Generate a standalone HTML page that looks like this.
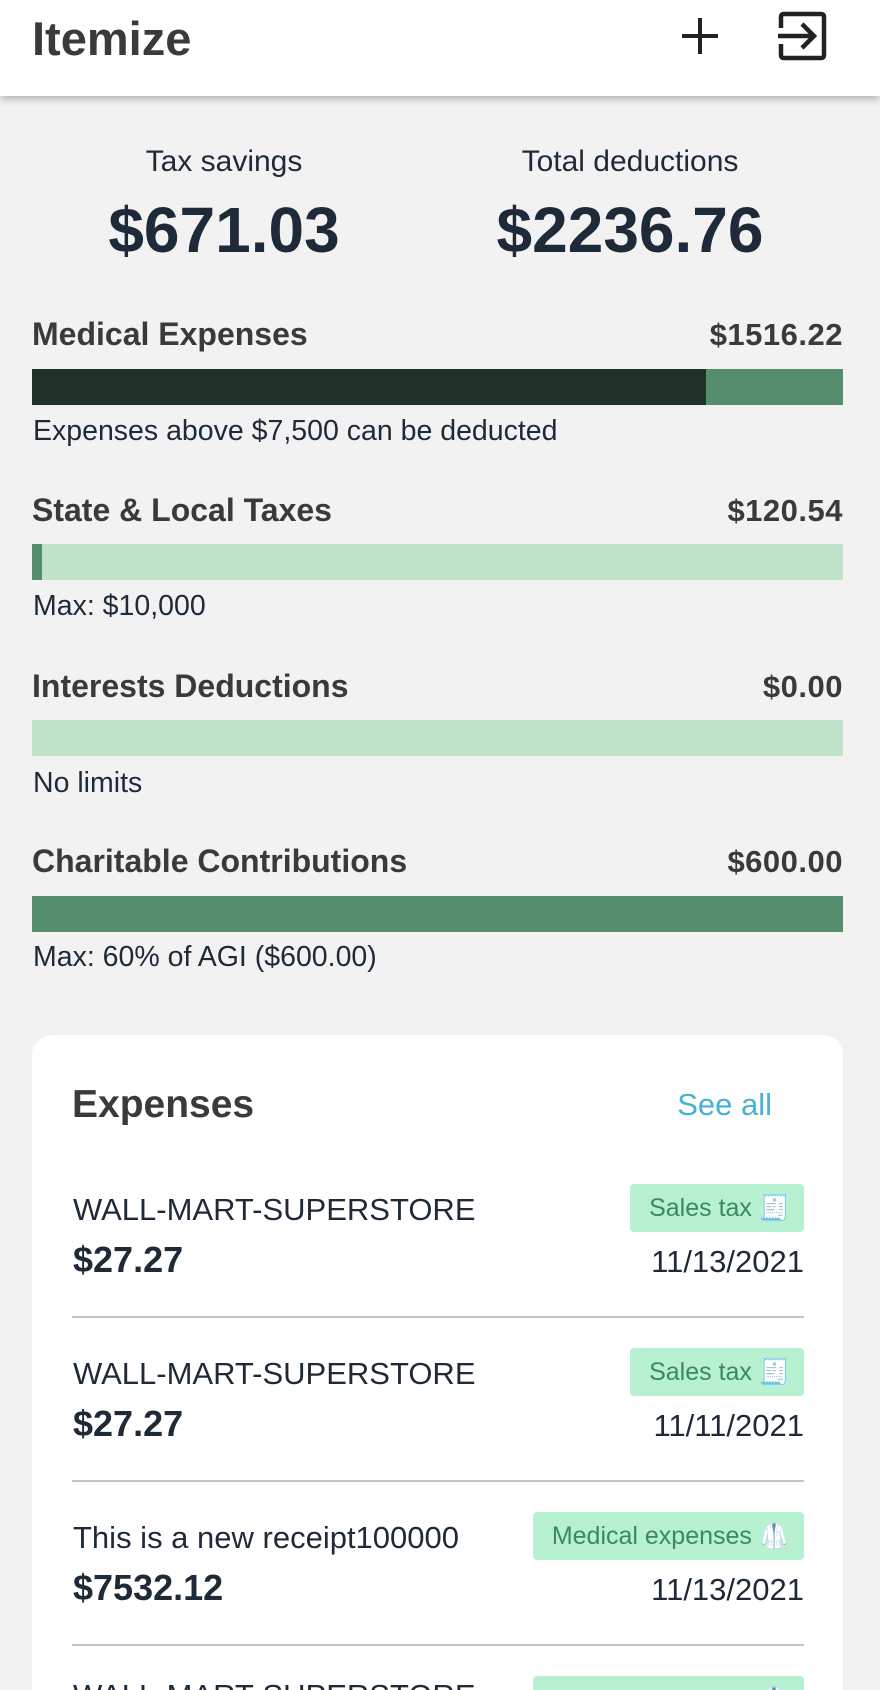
<!DOCTYPE html>
<html style="overflow:hidden;height:1690px"><head><meta charset="utf-8"><style>
*{margin:0;padding:0;box-sizing:border-box}
body{width:880px;height:1690px;overflow:hidden;background:#f2f2f2;font-family:"Liberation Sans",sans-serif;color:#1e2a38;position:relative}
.hdr{position:absolute;left:0;top:0;width:880px;height:96px;background:#fff;box-shadow:0 3px 8px rgba(0,0,0,.28)}
.hdr h1{position:absolute;left:32px;top:11px;font-size:47px;font-weight:bold;color:#3a3a3a}
.a{position:absolute;white-space:nowrap}
.lbl{font-size:30px;color:#1e2a38;text-align:center;width:360px}
.big{font-size:64px;font-weight:bold;color:#1e2a38;text-align:center;width:440px}
.cat{font-size:32px;font-weight:bold;color:#3a3a3a}
.amt{font-size:31px;font-weight:bold;color:#3a3a3a;right:37px;letter-spacing:.5px}
.bar{position:absolute;left:32px;width:811px;height:36px;background:#c0e3c9}
.cap{font-size:28.5px;color:#1e2a38;left:33px}
.card{position:absolute;left:32px;top:1035px;width:811px;height:655px;background:#fff;border-radius:20px 20px 0 0}
.nm{font-size:31px;left:73px;color:#1e2a38}
.pr{font-size:36px;font-weight:bold;left:73px;color:#1e2a38}
.dt{font-size:31px;right:76px;color:#1e2a38}
.tag{position:absolute;right:76px;height:48px;background:#b8f0d2;border-radius:4px;color:#3a8a5e;font-size:25px;line-height:48px;padding:0 14px 0 19px}
.dv{position:absolute;left:72px;width:732px;height:2px;background:#c4c4c4}
#wrap{position:absolute;left:0;top:0;width:880px;height:1690px;overflow:hidden}
</style></head><body><div id="wrap">
<div class="hdr"><h1>Itemize</h1>
<svg class="a" style="left:678px;top:14px" width="44" height="44" viewBox="0 0 44 44"><path d="M22 4V40M4 22H40" stroke="#222" stroke-width="4"/></svg>
<svg class="a" style="left:778px;top:10px" width="52" height="52" viewBox="0 0 52 52"><path d="M3 18V7Q3 4 6 4H43Q46 4 46 7V45Q46 48 43 48H6Q3 48 3 45V34" fill="none" stroke="#222" stroke-width="4.5"/><path d="M0 26H36M24 14L36 26L24 38" fill="none" stroke="#222" stroke-width="4.5"/></svg>
</div>
<div class="a lbl" style="left:44px;top:145px">Tax savings</div>
<div class="a lbl" style="left:450px;top:145px">Total deductions</div>
<div class="a big" style="left:4px;top:193px">$671.03</div>
<div class="a big" style="left:410px;top:193px">$2236.76</div>

<div class="a cat" style="left:32px;top:316px">Medical Expenses</div><div class="a amt" style="top:317px">$1516.22</div>
<div class="bar" style="top:369px;background:#558e6e"><div style="width:674px;height:36px;background:#203128"></div></div>
<div class="a cap" style="top:415px">Expenses above $7,500 can be deducted</div>

<div class="a cat" style="left:32px;top:492px">State &amp; Local Taxes</div><div class="a amt" style="top:493px">$120.54</div>
<div class="bar" style="top:544px"><div style="width:10px;height:36px;background:#558e6e"></div></div>
<div class="a cap" style="top:590px">Max: $10,000</div>

<div class="a cat" style="left:32px;top:668px">Interests Deductions</div><div class="a amt" style="top:669px">$0.00</div>
<div class="bar" style="top:720px"></div>
<div class="a cap" style="top:767px">No limits</div>

<div class="a cat" style="left:32px;top:843px">Charitable Contributions</div><div class="a amt" style="top:844px">$600.00</div>
<div class="bar" style="top:896px;background:#558e6e"></div>
<div class="a cap" style="top:941px">Max: 60% of AGI ($600.00)</div>

<div class="card"></div>
<div class="a" style="left:72px;top:1083px;font-size:39px;font-weight:bold;color:#3a3a3a">Expenses</div>
<div class="a" style="right:108px;top:1087px;font-size:31px;color:#45b2d3">See all</div>

<div class="tag" style="top:1184px">Sales tax 🧾</div>
<div class="a nm" style="top:1192px">WALL-MART-SUPERSTORE</div>
<div class="a pr" style="top:1239px">$27.27</div>
<div class="a dt" style="top:1244px">11/13/2021</div>
<div class="dv" style="top:1316px"></div>

<div class="tag" style="top:1348px">Sales tax 🧾</div>
<div class="a nm" style="top:1356px">WALL-MART-SUPERSTORE</div>
<div class="a pr" style="top:1403px">$27.27</div>
<div class="a dt" style="top:1408px">11/11/2021</div>
<div class="dv" style="top:1480px"></div>

<div class="tag" style="top:1512px">Medical expenses 🥼</div>
<div class="a nm" style="top:1520px">This is a new receipt100000</div>
<div class="a pr" style="top:1567px">$7532.12</div>
<div class="a dt" style="top:1572px">11/13/2021</div>
<div class="dv" style="top:1644px"></div>

<div class="tag" style="top:1676px">Medical expenses 🥼</div>
<div class="a nm" style="top:1678px">WALL-MART-SUPERSTORE</div>
</div></body></html>
